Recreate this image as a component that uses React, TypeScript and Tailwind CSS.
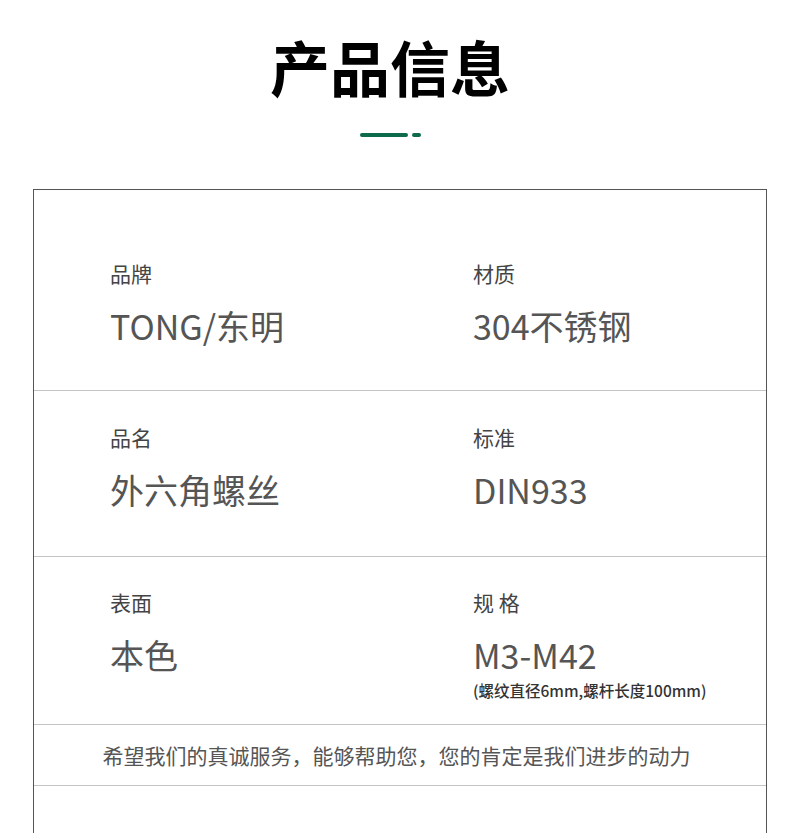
const font = { fontFamily: '"Noto Sans CJK SC", "Noto Sans", sans-serif' };

interface Item {
    label: string;
    value: string;
    note?: string;
}

const rows: { height: string; pad: string; items: Item[] }[] = [
    {
        height: "h-[201px]",
        pad: "pt-[69px]",
        items: [
            { label: "品牌", value: "TONG/东明" },
            { label: "材质", value: "304不锈钢" },
        ],
    },
    {
        height: "h-[166px]",
        pad: "pt-[32px]",
        items: [
            { label: "品名", value: "外六角螺丝" },
            { label: "标准", value: "DIN933" },
        ],
    },
    {
        height: "h-[168px]",
        pad: "pt-[31px]",
        items: [
            { label: "表面", value: "本色" },
            {
                label: "规 格",
                value: "M3-M42",
                note: "(螺纹直径6mm,螺杆长度100mm)",
            },
        ],
    },
];

function Cell({ item }: { item: Item }) {
    return (
        <div className="flex flex-col">
            <p className="text-[21px] leading-[28px] text-[#444]">{item.label}</p>
            <p className="mt-[17px] text-[34px] leading-[44px] text-[#555]">
                {item.value}
            </p>
            {item.note && (
                <p className="mt-[3px] text-[15.5px] leading-[20px] font-medium text-[#333]">
                    {item.note}
                </p>
            )}
        </div>
    );
}

export default function App() {
    return (
        <div className="w-[790px] h-[833px] overflow-hidden bg-white" style={font}>
            {/* heading */}
            <div className="flex flex-col items-center pt-[31px] pr-[10px]">
                <h1 className="text-[60px] leading-[70px] font-bold text-black">
                    产品信息
                </h1>
                <div className="mt-[32px] flex items-center gap-[4px]">
                    <span className="block w-[48px] h-[4px] rounded-full bg-[#0d6a4a]" />
                    <span className="block w-[9px] h-[4px] rounded-full bg-[#0d6a4a]" />
                </div>
            </div>

            {/* table */}
            <div className="mt-[52px] ml-[33px] w-[734px] border border-[#555] border-b-0">
                {rows.map((row, i) => (
                    <div
                        key={i}
                        className={`${row.height} ${row.pad} grid grid-cols-[363px_1fr] pl-[76px] border-b border-[#c4c4c4]`}
                    >
                        {row.items.map((item) => (
                            <Cell key={item.label} item={item} />
                        ))}
                    </div>
                ))}
                <div className="h-[61px] flex items-center justify-center pr-[7px] border-b border-[#c4c4c4]">
                    <p className="text-[21px] leading-[28px] text-[#555]">
                        希望我们的真诚服务，能够帮助您，您的肯定是我们进步的动力
                    </p>
                </div>
                <div className="h-[60px]" />
            </div>
        </div>
    );
}
